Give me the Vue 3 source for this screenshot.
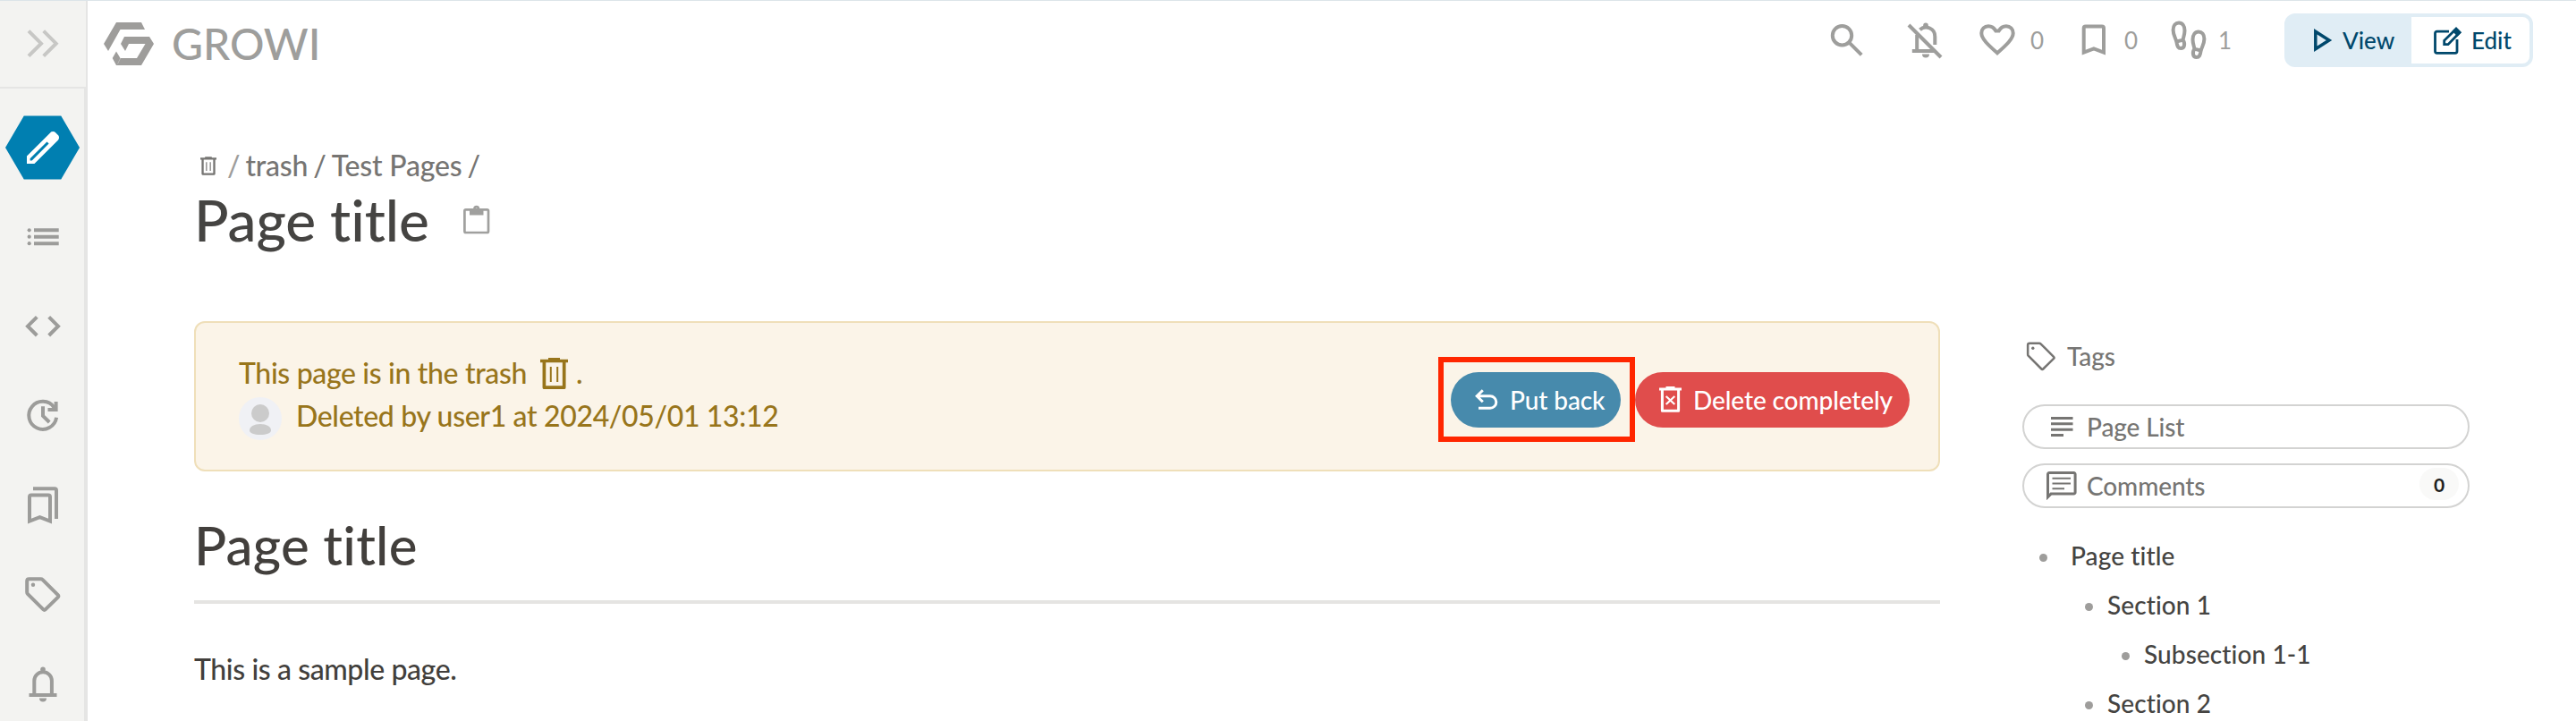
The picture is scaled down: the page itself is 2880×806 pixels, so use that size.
<script setup>
const toc = [
  { label: 'Page title', level: 1 },
  { label: 'Section 1', level: 2 },
  { label: 'Subsection 1-1', level: 3 },
  { label: 'Section 2', level: 2 },
]
const tagPath =
  'M8.5 6.2H21.5Q22.8 6.2 23.7 7.1L40.8 24.2Q42 25.4 40.8 26.6L27 40.2Q25.6 41.6 24.2 40.2L7.1 23.1Q6.2 22.2 6.2 21V8.5Q6.2 6.2 8.5 6.2z'
const footPath =
  'M10.3 25.5C9.5 21.5 6.6 18.5 6.6 12.5C6.6 7.5 9.4 4.4 13 4.4C17 4.4 19.5 8 19.5 13C19.5 18 18 20.5 17.6 23.6C20.5 28.5 19 33 15.3 33C12.2 33 11.2 31 10.3 25.5L17.6 23.6'
</script>

<template>
  <div class="app">
    <nav class="sidebar">
      <button class="toggle">
        <svg class="ico" viewBox="0 0 48 48"><path d="M8 10.7L22 24.7L8 38.7M24.7 10.7L38.7 24.7L24.7 38.7" /></svg>
      </button>
      <div class="side-items">
        <button class="side-item create">
          <svg class="hexagon" viewBox="0 0 84 72"><path d="M0 36L21 0H63L84 36L63 72H21z" /></svg>
          <svg class="ico pencil" viewBox="0 -960 960 960">
            <path d="M192-192h42l378-378-42-42-378 378v42Zm-72 72v-170l528-527q12-11 26.500-17t30.500-6q16 0 31 6t26 18l55 56q12 11 17.500 26t5.500 30q0 16-5.500 30.500T817-647L290-120H120Z" />
          </svg>
        </button>
        <button class="side-item">
          <svg class="ico" viewBox="0 0 48 48">
            <g class="solid"><circle cx="8.700" cy="16.300" r="2.100" /><circle cx="8.700" cy="23.700" r="2.100" /><circle cx="8.700" cy="31.200" r="2.100" /></g>
            <path d="M14 16.300H41.700M14 23.700H41.700M14 31.200H41.700" />
          </svg>
        </button>
        <button class="side-item">
          <svg class="ico" viewBox="0 0 48 48"><path d="M17.300 13.300L7 23.700L17.300 34M30.700 13.300L41 23.700L30.700 34" /></svg>
        </button>
        <button class="side-item">
          <svg class="ico" viewBox="0 0 48 48">
            <path d="M39.100 25.700A15.500 15.500 0 1 1 36.500 14.500L38.500 17" />
            <path d="M38.600 8V17H29.500" />
            <path d="M24 13.200V23.800L31.200 31" />
          </svg>
        </button>
        <button class="side-item">
          <svg class="ico" viewBox="0 0 48 48">
            <path d="M9 41.500V14.500a2 2 0 0 1 2-2H30a2 2 0 0 1 2 2V41.500L20.500 37.200z" />
            <path d="M13 5.200H37a2 2 0 0 1 2 2V39" />
          </svg>
        </button>
        <button class="side-item">
          <svg class="ico" viewBox="0 0 48 48"><path :d="tagPath" /><circle class="solid" cx="13" cy="12.700" r="2.200" /></svg>
        </button>
        <button class="side-item">
          <svg class="ico" viewBox="0 0 48 48">
            <path d="M14.300 36V20a9.800 9.800 0 0 1 19.600 0V36M8.500 36H39.500" />
            <g class="solid"><circle cx="24" cy="7.300" r="2.800" /><path d="M20 39.500h8a4 4 0 0 1-8 0z" /></g>
          </svg>
        </button>
      </div>
    </nav>

    <div class="main">
      <header class="topbar">
        <div class="brand">
          <svg class="logo" viewBox="0 0 56 48">
            <path d="M14 0H42L46 8H18.500L5 32L0 24z" />
            <path d="M23 16H51L56 24L42 48H14L9.700 40L14 32.500L18.500 40H37L46.500 24H28L24 32L19 24z" />
            <path class="notch" d="M18.700 40L15.500 46.500" />
          </svg>
          <span class="brand-name">GROWI</span>
        </div>
        <div class="tools">
          <svg class="ico search" viewBox="0 0 48 48"><circle cx="18.500" cy="18.700" r="10.700" /><path d="M26 26.200L40.200 40.400" /></svg>
          <svg class="ico bell-off" viewBox="0 0 48 48">
            <path d="M17.500 12.300A10 10 0 0 1 34.300 20V29M14.200 18V36M8.800 36H34" />
            <path d="M5 7L41 43" />
            <g class="solid"><circle cx="24" cy="7.300" r="2.800" /><path d="M20 39.500h8a4 4 0 0 1-8 0z" /></g>
          </svg>
          <div class="counter like">
            <svg class="ico" viewBox="0 0 48 48">
              <path d="M24 38.300C14 29.500 6.300 22.500 6.300 16C6.300 11.500 9.600 8.200 14 8.200C18 8.200 20.600 10.500 22.300 13.500H25.700C27.400 10.500 30 8.200 34 8.200C38.400 8.200 41.700 11.500 41.700 16C41.700 22.500 34 29.500 24 38.300z" />
            </svg>
            <span>0</span>
          </div>
          <div class="counter mark">
            <svg class="ico" viewBox="0 0 48 48"><path d="M12.700 37.500V10.500a2 2 0 0 1 2-2H33a2 2 0 0 1 2 2V37.500L23.900 33.300z" /></svg>
            <span>0</span>
          </div>
          <div class="counter seen">
            <svg class="ico" viewBox="0 0 48 48">
              <path :d="footPath" /><path :d="footPath" transform="translate(48 10) scale(-1 1)" />
            </svg>
            <span>1</span>
          </div>
          <div class="switch">
            <button class="mode view">
              <svg class="play" viewBox="0 0 20 26"><path d="M1.800 3.200L17 13L1.800 22.800z" /></svg>
              View
            </button>
            <button class="mode edit">
              <svg class="compose" viewBox="0 0 31 31">
                <path d="M17 5.200H3.500a2 2 0 0 0-2 2V27.300a2 2 0 0 0 2 2H24a2 2 0 0 0 2-2V14" />
                <path d="M11.700 19.600V15.300L25 2.200L29 6.200L16 19.600z" />
                <path class="tip" d="M22.500 4.700L25 2.200L29 6.200L26.500 8.700z" />
              </svg>
              Edit
            </button>
          </div>
        </div>
      </header>

      <div class="page-head">
        <div class="crumbs">
          <svg class="trash small" viewBox="0 0 31 35">
            <path d="M0 3.500H31M9 1.800H22M4.400 4V33.200H26.700V4" /><path class="thin" d="M11.800 10V27M19.200 10V27" />
          </svg>
          <span class="root">/</span><span class="trash-link">trash</span><span>/</span><span>Test Pages</span><span>/</span>
        </div>
        <div class="title-row">
          <div class="title">Page title</div>
          <svg class="clipboard" viewBox="0 0 30 32">
            <rect x="1.400" y="4.300" width="26.600" height="25.700" rx="1.500" />
            <path class="clip" d="M7 5H22.500V10.500H7z" /><circle cx="14.700" cy="3.300" r="2.200" />
          </svg>
        </div>
      </div>

      <div class="columns">
        <main class="content">
          <section class="alert">
            <div class="notice">
              <div class="notice-line">
                <span>This page is in the trash</span>
                <svg class="trash" viewBox="0 0 31 35">
                  <path d="M0 3.500H31M9 1.800H22M4.400 4V33.200H26.700V4" /><path class="thin" d="M11.800 10V27M19.200 10V27" />
                </svg>
                <span>.</span>
              </div>
              <div class="notice-line second">
                <svg class="avatar" viewBox="0 0 48 48">
                  <circle class="disc" cx="24" cy="24" r="24" /><circle cx="24" cy="18" r="10" />
                  <path d="M12 37C12 33 17 30 24 30S36 33 36 37C36 40.500 31 42 24 42S12 40.500 12 37z" />
                </svg>
                <span>Deleted by user1 at 2024/05/01 13:12</span>
              </div>
            </div>
            <div class="actions">
              <div class="highlight">
                <button class="pill restore">
                  <svg class="undo" viewBox="0 0 26 23"><path d="M8.800 1.200L2.200 7.700L8.800 14.200M2.200 7.700H17a6.800 6.800 0 0 1 0 13.600H4" /></svg>
                  <span>Put back</span>
                </button>
              </div>
              <button class="pill remove">
                <svg class="trash-x" viewBox="0 0 25 29">
                  <path d="M0 3H25M7.500 1.500H17.500M3.400 3V27.300H21.600V3" /><path class="thin" d="M7.700 11L17.300 20M17.300 11L7.700 20" />
                </svg>
                <span>Delete completely</span>
              </button>
            </div>
          </section>
          <h1 class="heading">Page title</h1>
          <p class="body-text">This is a sample page.</p>
        </main>

        <aside class="aside">
          <div class="tags">
            <svg class="tag-ico" viewBox="4 4 40 39.500"><path :d="tagPath" /><circle class="solid" cx="13" cy="12.700" r="2" /></svg>
            <span>Tags</span>
          </div>
          <button class="outline">
            <svg class="aside-ico" viewBox="0 0 34 32"><path d="M5 6.500H29.500M5 12.800H29.500M5 19.200H29.500M5 25.500H19" /></svg>
            <span>Page List</span>
          </button>
          <button class="outline">
            <svg class="aside-ico" viewBox="0 0 34 32">
              <path d="M1.500 28.500V3.200a1.600 1.600 0 0 1 1.600-1.600H30.500a1.600 1.600 0 0 1 1.600 1.600V23.400a1.600 1.600 0 0 1-1.600 1.600H5z" />
              <path class="solid" d="M0 32V25H7z" /><path class="thin" d="M6.500 7.800H27M6.500 13.600H27M6.500 19.200H20" />
            </svg>
            <span>Comments</span>
            <span class="badge">0</span>
          </button>
          <ul class="toc">
            <li v-for="item in toc" :key="item.label" :class="'level-' + item.level"><i class="dot"></i><span>{{ item.label }}</span></li>
          </ul>
        </aside>
      </div>
    </div>
  </div>
</template>

<style>
body { margin: 0; overflow: hidden; background: #fff; }
</style>

<style scoped>
* { box-sizing: border-box; }
.app { display: flex; height: 806px; overflow: hidden; border-top: 1px solid #dce4e9; background: #fff; color: #423f3c; font-family: Lato, "Open Sans", sans-serif; font-size: 32px; font-weight: 500; font-variant-ligatures: none; letter-spacing: -.4px; }
button { margin: 0; padding: 0; border: 0; background: none; font: inherit; color: inherit; letter-spacing: inherit; }
svg { display: block; flex: none; fill: none; stroke: currentColor; overflow: visible; }
span { white-space: nowrap; }
.ico { width: 48px; height: 48px; stroke-width: 4; }
.solid { fill: currentColor; stroke: none; }

.sidebar { width: 98px; flex: none; display: flex; flex-direction: column; background: #f3f3f1; color: #9c9c9a; }
.toggle { display: flex; align-items: flex-start; height: 98px; flex: none; padding: 23px 0 0 24px; border-right: 2px solid #e5e5e4; border-bottom: 2px solid #e5e5e4; color: #c7c7c5; }
.side-items { flex: 1; padding-top: 16px; border-right: 4px solid #e5e5e4; }
.side-item { display: grid; width: 96px; height: 100px; place-items: center; }
.side-item > svg { grid-area: 1 / 1; }
.hexagon { width: 83px; height: 72px; margin-right: 1px; fill: #007fb1; stroke: none; }
.pencil { fill: #fff; stroke: none; }

.main { flex: 1; min-width: 0; }
.topbar { height: 88px; padding: 0 48px 0 18px; display: flex; justify-content: space-between; align-items: center; color: #9e9e9c; letter-spacing: 0; }
.brand { display: flex; align-items: center; margin-top: 8px; gap: 20px; }
.logo { width: 56px; height: 48px; fill: #9e9d9b; stroke: none; }
.logo .notch { stroke: #fff; stroke-width: .7; opacity: .4; }
.brand-name { font-size: 48px; line-height: 48px; }
.tools { display: flex; align-items: center; }
.search { margin-right: 40px; }
.bell-off { margin-right: 32px; }
.counter { display: flex; align-items: center; gap: 13px; font-size: 26px; font-weight: 400; }
.counter span { margin-top: -1px; }
.like { width: 108px; }
.mark { width: 106px; gap: 10px; }
.seen { width: 131px; gap: 9px; }
.switch { display: flex; width: 278px; height: 60px; border: 4px solid #e0edf5; border-radius: 12px; background: #e0edf5; color: #00486c; font-size: 26px; }
.mode { display: flex; align-items: center; }
.view { width: 138px; padding-left: 29px; gap: 12px; }
.edit { width: 132px; padding-left: 25px; gap: 11px; border-radius: 0 8px 8px 0; background: #fff; }
.play { width: 20px; height: 26px; stroke-width: 3.5; }
.compose { width: 31px; height: 31px; stroke-width: 2.8; }
.tip { fill: currentColor; }

.page-head { height: 270px; padding: 76px 0 0 119px; }
.crumbs { display: flex; align-items: center; height: 40px; padding-left: 7px; color: #767573; line-height: 40px; gap: 6px; letter-spacing: -.2px; }
.trash { width: 31px; height: 35px; stroke-width: 3.700; stroke-linejoin: round; }
.trash .thin { stroke-width: 2; }
.small { width: 18px; height: 21px; margin-right: 6px; stroke-width: 4; }
.root { color: #9e9d9b; }
.title-row { display: flex; align-items: center; height: 76px; margin-top: 3px; }
.title { padding-right: 38px; font-size: 64px; line-height: 76px; color: #454442; letter-spacing: -.1px; }
.clipboard { width: 30px; height: 32px; color: #a0a09e; stroke-width: 2.700; }
.clip { fill: currentColor; stroke: none; }

.columns { display: flex; padding-left: 119px; }
.content { width: 1952px; flex: none; }
.alert { display: flex; justify-content: space-between; align-items: center; height: 168px; padding: 0 32px 0 48px; border: 2px solid #efdfb9; border-radius: 12px; background: #fbf4e8; color: #98751b; }
.notice { height: 100px; letter-spacing: -.35px; }
.notice-line { display: flex; align-items: center; height: 48px; gap: 9px; }
.notice-line span { margin-top: -2px; }
.notice-line .trash { margin-left: 6px; }
.second { gap: 16px; }
.avatar { width: 48px; height: 48px; margin-top: 5px; fill: #cbcbcb; stroke: none; }
.disc { fill: #f0f1f5; }
.actions { display: flex; align-items: center; height: 95px; margin-top: 7px; letter-spacing: -.1px; }
.highlight { display: flex; align-items: center; width: 220px; height: 95px; padding-left: 8px; border: 6px solid #ff2600; }
.pill { display: flex; align-items: center; height: 62px; border-radius: 31px; color: #fff; font-size: 28px; }
.restore { width: 190px; padding-left: 27px; gap: 13px; background: #478aac; }
.remove { width: 307px; padding-left: 27px; gap: 13px; background: #e04d4c; }
.undo { width: 26px; height: 23px; stroke-width: 3; }
.trash-x { width: 25px; height: 29px; stroke-width: 3; stroke-linejoin: round; }
.trash-x .thin { stroke-width: 2.200; }
.heading { margin: 46px 0 0; padding-bottom: 26px; border-bottom: 4px solid #e5e4e2; font-size: 60px; font-weight: 500; line-height: 72px; letter-spacing: .25px; }
.body-text { margin: 49px 0 0; line-height: 48px; }

.aside { width: 500px; margin-left: 92px; padding-top: 22px; color: #767573; font-size: 28px; letter-spacing: -.1px; }
.tags { display: flex; align-items: center; height: 34px; margin-bottom: 37px; padding-left: 4px; gap: 12px; }
.tag-ico { width: 34px; height: 33px; stroke-width: 3; }
.outline { display: flex; align-items: center; width: 500px; height: 50px; margin-bottom: 16px; padding: 0 10px 0 25px; border: 2px solid #d3d3d2; border-radius: 25px; gap: 11px; }
.aside-ico { width: 34px; height: 32px; stroke-width: 3; }
.aside-ico .thin { stroke-width: 2; }
.badge { width: 44px; height: 36px; margin: -4px 0 0 auto; border-radius: 18px; background: #f9f9f8; color: #1f1f1e; font-size: 21px; font-weight: 700; line-height: 37px; text-align: center; }
.toc { margin: 25px 0 0; padding: 0; list-style: none; color: #454442; letter-spacing: .1px; }
.toc li { display: flex; align-items: center; height: 55px; }
.dot { width: 9px; height: 9px; margin-top: 5px; border-radius: 50%; background: #9e9d9b; }
.level-1 { padding-left: 19px; gap: 26px; }
.level-2 { padding-left: 70px; gap: 16px; }
.level-3 { padding-left: 111px; gap: 16px; }
</style>
